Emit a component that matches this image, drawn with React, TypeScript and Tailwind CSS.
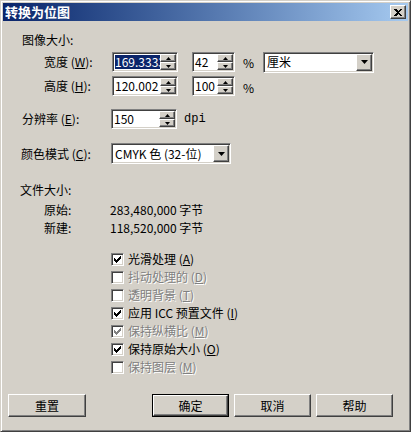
import type { ReactNode } from "react";

const field =
  "bg-white border border-t-[#808080] border-l-[#808080] border-b-white border-r-white shadow-[inset_1px_1px_0_#404040,inset_-1px_-1px_0_#d4d0c8]";
const raised =
  "bg-[#d4d0c8] border border-t-white border-l-white border-b-[#404040] border-r-[#404040] shadow-[inset_-1px_-1px_0_#808080]";

function Spinner() {
  return (
    <div className="flex h-full w-[16px] shrink-0 flex-col">
      <div className={`${raised} flex h-1/2 items-center justify-center`}>
        <svg width="5" height="3" viewBox="0 0 5 3">
          <path d="M2.5 0 L5 3 L0 3 Z" fill="#000" />
        </svg>
      </div>
      <div className={`${raised} flex h-1/2 items-center justify-center`}>
        <svg width="5" height="3" viewBox="0 0 5 3">
          <path d="M0 0 L5 0 L2.5 3 Z" fill="#000" />
        </svg>
      </div>
    </div>
  );
}

function SpinBox({ value, width, selected }: { value: string; width: string; selected?: boolean }) {
  return (
    <div className={`${field} flex h-[20px] ${width} items-stretch p-[1px]`}>
      <div className="flex min-w-0 flex-1 items-center overflow-hidden whitespace-nowrap pl-[1px]">
        {selected ? <span className="bg-[#0a246a] text-white">{value}</span> : <span>{value}</span>}
      </div>
      <Spinner />
    </div>
  );
}

function Combo({ value, width }: { value: string; width: string }) {
  return (
    <div className={`${field} flex h-[21px] ${width} items-stretch p-[1px]`}>
      <div className="flex flex-1 items-center pl-[2px] whitespace-nowrap">{value}</div>
      <div className={`${raised} flex w-[16px] items-center justify-center`}>
        <svg width="7" height="4" viewBox="0 0 7 4">
          <path d="M0 0 L7 0 L3.5 4 Z" fill="#000" />
        </svg>
      </div>
    </div>
  );
}

function Check({ checked, disabled }: { checked?: boolean; disabled?: boolean }) {
  return (
    <div
      className={`${field} flex h-[13px] w-[13px] shrink-0 items-center justify-center ${disabled ? "bg-[#d4d0c8]" : ""}`}
    >
      {checked && (
        <svg width="7" height="7" viewBox="0 0 7 7" shapeRendering="crispEdges">
          <path
            d="M6 0h1v3h-1zM5 1h1v3h-1zM4 2h1v3h-1zM0 2h1v3h-1zM1 3h1v3h-1zM3 3h1v3h-1zM2 4h1v3h-1z"
            fill={disabled ? "#808080" : "#000"}
          />
        </svg>
      )}
    </div>
  );
}

function CheckRow({ label, checked, disabled }: { label: ReactNode; checked?: boolean; disabled?: boolean }) {
  return (
    <div className="ml-[108px] flex h-[18px] items-center gap-[4px]">
      <Check checked={checked} disabled={disabled} />
      <span className={disabled ? "text-[#808080] [text-shadow:1px_1px_0_#fff]" : ""}>{label}</span>
    </div>
  );
}

function Btn({ children, def, className = "" }: { children: ReactNode; def?: boolean; className?: string }) {
  return (
    <div className={`h-[23px] w-[77px] ${def ? "border border-black" : ""} ${className}`}>
      <div className={`${raised} flex h-full w-full items-center justify-center`}>{children}</div>
    </div>
  );
}

const U = ({ c }: { c: string }) => <span className="underline">{c}</span>;

export default function App() {
  return (
    <div className="h-[432px] w-[411px] bg-[#d4d0c8] font-['Noto_Sans_CJK_SC',sans-serif] text-[12px] leading-[14px] text-black">
      <div className="flex h-full w-full flex-col border border-t-[#d4d0c8] border-l-[#d4d0c8] border-b-[#404040] border-r-[#404040] p-[2px] shadow-[inset_1px_1px_0_#fff,inset_-1px_-1px_0_#808080]">
        {/* title bar */}
        <div className="flex h-[18px] shrink-0 items-center justify-between bg-gradient-to-r from-[#0a246a] to-[#a6caf0] pl-[2px] pr-[2px]">
          <span className="text-[13px] font-bold text-white">转换为位图</span>
          <div className={`${raised} flex h-[14px] w-[16px] items-center justify-center`}>
            <svg width="8" height="7" viewBox="0 0 8 7" shapeRendering="crispEdges">
              <path d="M0 0h2l2 2 2-2h2l-3 3.5 3 3.5h-2l-2-2-2 2h-2l3-3.5z" fill="#000" />
            </svg>
          </div>
        </div>

        <div className="mt-[12px] flex h-[14px] items-center pl-[19px]">图像大小:</div>

        <div className="mt-[5px] flex h-[20px] items-center">
          <div className="ml-[41px] w-[68px]">
            宽度 (<U c="W" />):
          </div>
          <SpinBox value="169.3333" width="w-[66px]" selected />
          <div className="ml-[14px]">
            <SpinBox value="42" width="w-[43px]" />
          </div>
          <span className="ml-[8px] mt-[2px]">%</span>
          <div className="ml-[9px]">
            <Combo value="厘米" width="w-[111px]" />
          </div>
        </div>

        <div className="mt-[4px] flex h-[20px] items-center">
          <div className="ml-[41px] w-[68px]">
            高度 (<U c="H" />):
          </div>
          <SpinBox value="120.002" width="w-[66px]" />
          <div className="ml-[14px]">
            <SpinBox value="100" width="w-[43px]" />
          </div>
          <span className="ml-[8px] mt-[4px]">%</span>
        </div>

        <div className="mt-[13px] flex h-[20px] items-center">
          <div className="ml-[19px] w-[89px]">
            分辨率 (<U c="E" />):
          </div>
          <SpinBox value="150" width="w-[66px]" />
          <span className="ml-[7px] font-['Liberation_Mono',monospace] text-[12px]">dpi</span>
        </div>

        <div className="mt-[14px] flex h-[21px] items-center">
          <div className="ml-[18px] w-[90px]">
            颜色模式 (<U c="C" />):
          </div>
          <Combo value="CMYK 色 (32-位)" width="w-[120px]" />
        </div>

        <div className="mt-[19px] flex h-[14px] items-center pl-[17px]">文件大小:</div>
        <div className="mt-[6px] flex h-[14px] items-center">
          <div className="ml-[41px] w-[66px]">原始:</div>
          <span>283,480,000 字节</span>
        </div>
        <div className="mt-[4px] flex h-[14px] items-center">
          <div className="ml-[41px] w-[66px]">新建:</div>
          <span>118,520,000 字节</span>
        </div>

        <div className="mt-[15px] flex flex-col">
          <CheckRow checked label={<>光滑处理 (<U c="A" />)</>} />
          <CheckRow disabled label={<>抖动处理的 (<U c="D" />)</>} />
          <CheckRow disabled label={<>透明背景 (<U c="T" />)</>} />
          <CheckRow checked label={<>应用 ICC 预置文件 (<U c="I" />)</>} />
          <CheckRow checked disabled label={<>保持纵横比 (<U c="M" />)</>} />
          <CheckRow checked label={<>保持原始大小 (<U c="O" />)</>} />
          <CheckRow disabled label={<>保持图层 (<U c="M" />)</>} />
        </div>

        <div className="mt-[18px] flex items-center">
          <Btn className="ml-[5px] w-[78px]">重置</Btn>
          <Btn def className="ml-[66px]">确定</Btn>
          <Btn className="ml-[5px]">取消</Btn>
          <Btn className="ml-[5px]">帮助</Btn>
        </div>
      </div>
    </div>
  );
}
